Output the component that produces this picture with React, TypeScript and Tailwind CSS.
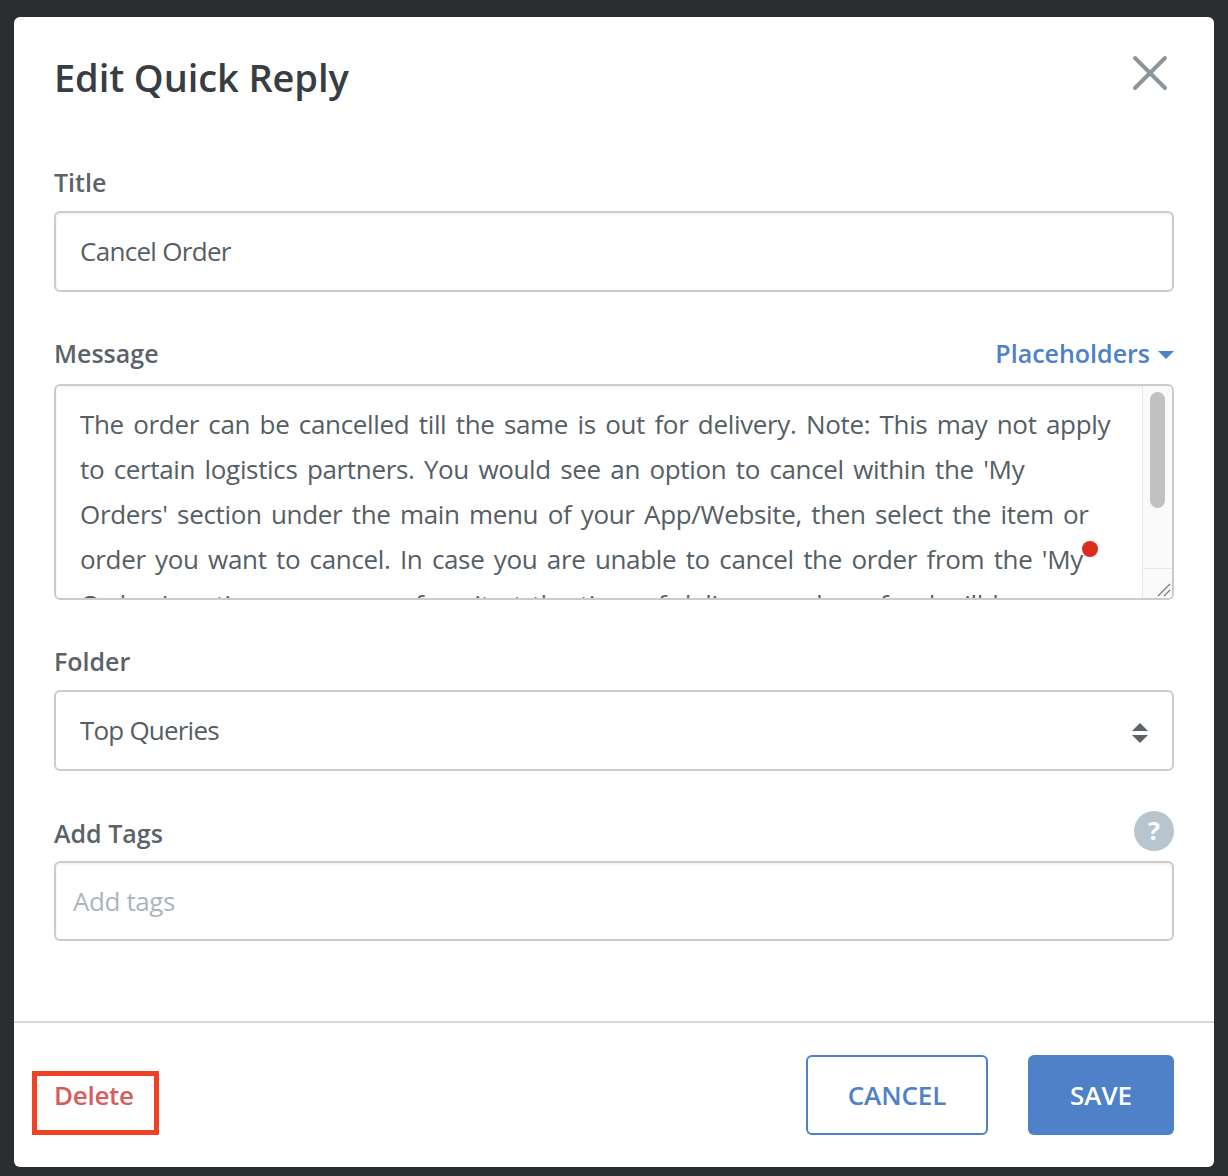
import React from "react";

const font = "font-['Open_Sans','Noto_Sans',sans-serif]";

const Label = ({ children }: { children: React.ReactNode }) => (
  <label className="block text-[25px] leading-[30px] font-semibold tracking-[0px] text-[#5b6369]">
    {children}
  </label>
);

const App = () => {
  return (
    <div className={`relative h-[1176px] w-[1228px] overflow-hidden bg-[#2b2d31] pl-[14px] pt-[17px] ${font}`}>
      <div className="flex h-[1150px] w-[1200px] flex-col rounded-[6px] bg-white">
        <header className="flex items-start justify-between pl-[40px] pr-[44px] pt-[34px]">
          <h1 className="text-[38px] leading-[52px] font-semibold tracking-[-0.1px] text-[#383d43]">
            Edit Quick Reply
          </h1>
          <svg className="mt-[2px]" width="40" height="40" viewBox="0 0 40 40">
            <path d="M5 5 L35 35 M35 5 L5 35" stroke="#8b959b" strokeWidth="4" strokeLinecap="round" />
          </svg>
        </header>

        <div className="flex-1 px-[40px] pt-[64px]">
          <Label>Title</Label>
          <div className="mt-[14px] flex h-[81px] items-center rounded-[6px] border-2 border-[#cccccc] pl-[24px] text-[26px] tracking-[-0.7px] text-[#555e65] shadow-[inset_0_1px_3px_rgba(0,0,0,0.08)]">
            Cancel Order
          </div>

          <div className="mt-[46px] flex items-center justify-between">
            <Label>Message</Label>
            <div className="flex items-center gap-[8px] text-[25px] leading-[30px] font-semibold tracking-[0px] text-[#4e81c7]">
              Placeholders
              <span className="mt-[3px] h-0 w-0 border-x-[8px] border-t-[8px] border-x-transparent border-t-[#4e81c7]" />
            </div>
          </div>
          <div className="relative mt-[16px] flex h-[216px] overflow-hidden rounded-[6px] border-2 border-[#cccccc] shadow-[inset_0_1px_3px_rgba(0,0,0,0.08)]">
            <p className="flex-1 pl-[24px] pr-[28px] pt-[16px] text-[26px] leading-[45px] tracking-[-0.34px] text-[#555e65] [word-spacing:3px]">
              The order can be cancelled till the same is out for delivery. Note: This may not apply to certain logistics partners. You would see an option to cancel within the 'My Orders' section under the main menu of your App/Website, then select the item or order you want to cancel. In case you are unable to cancel the order from the 'My Orders' section, you may refuse it at the time of delivery and a refund will be
            </p>
            <div className="flex w-[30px] shrink-0 flex-col border-l border-[#e8e8e8] bg-[#fafafa]">
              <div className="flex-1 px-[7px] pt-[6px]">
                <div className="h-[116px] rounded-full bg-[#c1c1c1]" />
              </div>
              <div className="flex h-[30px] items-end justify-end border-t border-[#e8e8e8]">
                <svg width="16" height="16" viewBox="0 0 16 16">
                  <path d="M2 14 L14 2 M8 14 L14 8" stroke="#777" strokeWidth="1.2" />
                </svg>
              </div>
            </div>
          </div>

          <div className="mt-[46px]">
            <Label>Folder</Label>
          </div>
          <div className="mt-[14px] flex h-[81px] items-center justify-between rounded-[6px] border-2 border-[#cccccc] pl-[24px] pr-[24px] text-[26px] tracking-[-0.8px] text-[#555e65]">
            Top Queries
            <span className="mt-[5px] flex flex-col gap-[4px]">
              <span className="h-0 w-0 border-x-[8px] border-b-[8px] border-x-transparent border-b-[#5b6369]" />
              <span className="h-0 w-0 border-x-[8px] border-t-[8px] border-x-transparent border-t-[#5b6369]" />
            </span>
          </div>

          <div className="mt-[40px] flex items-center justify-between">
            <div className="pt-[4px]">
              <Label>Add Tags</Label>
            </div>
            <span className="flex h-[40px] w-[40px] items-center justify-center rounded-full bg-[#b9c5ce] text-[25px] font-bold text-white">
              ?
            </span>
          </div>
          <div className="mt-[10px] flex h-[80px] items-center rounded-[6px] border-2 border-[#cccccc] pl-[17px] text-[26px] tracking-[-0.4px] text-[#adb5bb] shadow-[inset_0_1px_3px_rgba(0,0,0,0.08)]">
            Add tags
          </div>
        </div>

        <footer className="flex h-[146px] items-center justify-between border-t-2 border-[#d8d8d8] pl-[40px] pr-[40px]">
          <span className="text-[26px] font-semibold tracking-[-0.3px] text-[#d95c5c]">Delete</span>
          <div className="flex gap-[40px]">
            <button className="flex h-[80px] w-[182px] items-center justify-center rounded-[6px] border-2 border-[#4e81c7] text-[26px] font-semibold tracking-[-0.1px] text-[#4e81c7]">
              CANCEL
            </button>
            <button className="flex h-[80px] w-[146px] items-center justify-center rounded-[6px] bg-[#4e81c7] text-[26px] font-semibold tracking-[-0.1px] text-white">
              SAVE
            </button>
          </div>
        </footer>
      </div>

      {/* annotations over the screenshot */}
      <span className="absolute left-[1082px] top-[541px] h-[16px] w-[16px] rounded-full bg-[#dc2c1e]" />
      <span className="absolute left-[32px] top-[1071px] h-[64px] w-[127px] border-[5px] border-[#ee4227]" />
    </div>
  );
};

export default App;
